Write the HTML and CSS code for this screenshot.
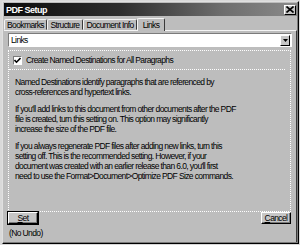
FILE: index.html
```html
<!DOCTYPE html>
<html lang="en">
<head>
    <meta charset="UTF-8">
    <title>PDF Setup</title>
    <link rel="stylesheet" href="styles.css">
</head>
<body>
    <div class="window">
        <div class="titlebar">
            <span class="title">PDF Setup</span>
            <span class="close">
                <svg width="8" height="7" viewBox="0 0 8 7"><path d="M0.5 0.5 L7.5 6.5 M7.5 0.5 L0.5 6.5" stroke="#000" stroke-width="1.6"/></svg>
            </span>
        </div>

        <div class="tabs">
            <span class="tab tab-bookmarks">Bookmarks</span>
            <span class="tab tab-structure">Structure</span>
            <span class="tab tab-info">Document Info</span>
            <span class="tab tab-links active">Links</span>
        </div>

        <div class="panel">
            <div class="select">
                <span class="select-text">Links</span>
                <span class="select-btn">
                    <svg width="5" height="3" viewBox="0 0 5 3"><path d="M0 0 H5 L2.5 3 Z" fill="#000"/></svg>
                </span>
            </div>

            <div class="group">
                <label class="check-row">
                    <span class="checkbox">
                        <svg width="7" height="7" viewBox="0 0 7 7"><path d="M0.5 3 L2.5 5.2 L6.5 1" stroke="#000" stroke-width="1.6" fill="none"/></svg>
                    </span>
                    Create Named Destinations for All Paragraphs
                </label>
                <div class="separator"></div>
                <div class="info">
                    <p>Named Destinations identify paragraphs that are referenced by<br>cross-references and hypertext links.</p>
                    <p>If you'll add links to this document from other documents after the PDF<br>file is created, turn this setting on. This option may significantly<br>increase the size of the PDF file.</p>
                    <p>If you always regenerate PDF files after adding new links, turn this<br>setting off. This is the recommended setting. However, if your<br>document was created with an earlier release than 6.0, you'll first<br>need to use the Format&gt;Document&gt;Optimize PDF Size commands.</p>
                </div>
            </div>

            <div class="buttons">
                <button class="btn btn-default"><u>S</u>et</button>
                <button class="btn"><u>C</u>ancel</button>
            </div>
            <div class="note">(No Undo)</div>
        </div>
    </div>
</body>
</html>
```

FILE: styles.css
```css
body {
    margin: 0;
    padding: 1px 1px 1px 2px;
    background-color: #d9d9d9;
    font-family: "Liberation Sans", Arial, sans-serif;
    font-size: 8.5px;
    letter-spacing: -0.62px;
    color: #000;
}
.window {
    width: 297px;
    height: 243px;
    box-sizing: border-box;
    padding: 1px;
    background-color: #bdbdbd;
    border: 1px solid;
    border-color: #e0e0e0 #000 #000 #e0e0e0;
    box-shadow: inset -1px -1px #7b7b7b;
    display: flex;
    flex-direction: column;
}
.titlebar {
    height: 13px;
    background: linear-gradient(to right, #0c0c0c 0%, #2e2e2e 40%, #6e6e6e 75%, #8a8a8a 100%);
    display: flex;
    align-items: center;
    justify-content: space-between;
    padding: 0 1px 0 2px;
}
.title {
    color: #fff;
    font-weight: bold;
    font-size: 9px;
    letter-spacing: -0.5px;
}
.close {
    width: 10px;
    height: 8px;
    background-color: #c6c6c6;
    border: 1px solid;
    border-color: #fff #000 #000 #fff;
    display: flex;
    align-items: center;
    justify-content: center;
}
.tabs {
    display: flex;
    align-items: flex-end;
    height: 13px;
    margin-top: 1px;
    position: relative;
    z-index: 1;
}
.tab {
    height: 11px;
    box-sizing: border-box;
    border: 1px solid;
    border-color: #f4f4f4 #3a3a3a transparent #f4f4f4;
    border-radius: 2px 2px 0 0;
    text-align: center;
    line-height: 10px;
    white-space: nowrap;
    background-color: #bdbdbd;
}
.tab-bookmarks { width: 43px; }
.tab-structure { width: 36px; }
.tab-info { width: 54px; }
.tab-links { width: 28px; }
.tab.active {
    height: 13px;
    line-height: 12px;
    margin-bottom: -1px;
    border-bottom: none;
}
.panel {
    flex: 1;
    border-top: 1px solid #f4f4f4;
    border-right: 1px solid #3a3a3a;
    padding: 2px 4px 0 4px;
    display: flex;
    flex-direction: column;
}
.select {
    height: 14px;
    box-sizing: border-box;
    background-color: #fff;
    border: 1px solid;
    border-color: #7b7b7b #fff #fff #7b7b7b;
    display: flex;
    align-items: center;
    justify-content: space-between;
    padding: 0 1px 0 2px;
}
.select-btn {
    width: 8px;
    height: 9px;
    background-color: #c6c6c6;
    border: 1px solid;
    border-color: #fff #000 #000 #fff;
    display: flex;
    align-items: center;
    justify-content: center;
}
.group {
    margin-top: 3px;
    margin-right: 1px;
    height: 162px;
    box-sizing: border-box;
    border: 1px dotted #fff;
}
.check-row {
    display: flex;
    align-items: center;
    height: 14px;
    padding-left: 4px;
    margin-top: 2px;
}
.checkbox {
    width: 9px;
    height: 9px;
    box-sizing: border-box;
    background-color: #fff;
    border: 1px solid;
    border-color: #7b7b7b #fff #fff #7b7b7b;
    margin-right: 4px;
    display: flex;
    align-items: center;
    justify-content: center;
}
.separator {
    margin-top: 2px;
    margin-right: 5px;
    border-top: 1px dotted #fff;
}
.info {
    padding-left: 6px;
    margin-top: 7px;
}
.info p {
    margin: 0 0 7px 0;
    line-height: 10px;
}
.buttons {
    display: flex;
    justify-content: space-between;
    margin-right: 1px;
}
.btn {
    width: 30px;
    height: 12px;
    padding: 0;
    font-family: inherit;
    font-size: 8.5px;
    letter-spacing: inherit;
    line-height: 9px;
    background-color: #c6c6c6;
    border: 1px solid;
    border-color: #fff #000 #000 #fff;
    box-shadow: inset -1px -1px #7b7b7b;
    color: #000;
}
.btn-default {
    outline: 1px solid #000;
}
.note {
    margin-top: 4px;
    padding-left: 1px;
}
```
